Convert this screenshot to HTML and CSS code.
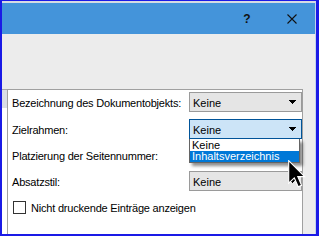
FILE: index.html
```html
<!DOCTYPE html>
<html lang="de">
<head>
<meta charset="utf-8">
<link rel="stylesheet" href="styles.css">
</head>
<body>
<div class="window">
  <div class="titlebar">
    <div class="capbtn help">?</div>
    <div class="capbtn close">
      <svg width="10" height="10" viewBox="0 0 10 10"><path d="M0.5 0.5 L9.5 9.5 M9.5 0.5 L0.5 9.5" stroke="#111" stroke-width="1.1" fill="none"/></svg>
    </div>
  </div>
  <div class="client">
    <div class="leftstrip"><div class="stripbox"></div></div>
    <div class="panel">
      <div class="row r1">
        <span class="label">Bezeichnung des Dokumentobjekts:</span>
        <div class="combo"><span class="val">Keine</span><svg class="arrow" width="7" height="4" viewBox="0 0 7 4" shape-rendering="crispEdges"><path d="M0 0h7v1h-1v1h-1v1h-1v1h-1v-1h-1v-1h-1v-1h-1z" fill="#000"/></svg></div>
      </div>
      <div class="row r2">
        <span class="label">Zielrahmen:</span>
        <div class="combo open"><span class="val">Keine</span><svg class="arrow" width="7" height="4" viewBox="0 0 7 4" shape-rendering="crispEdges"><path d="M0 0h7v1h-1v1h-1v1h-1v1h-1v-1h-1v-1h-1v-1h-1z" fill="#000"/></svg>
          <div class="droplist">
            <div class="item">Keine</div>
            <div class="item sel">Inhaltsverzeichnis</div>
          </div>
        </div>
      </div>
      <div class="row r3">
        <span class="label">Platzierung der Seitennummer:</span>
      </div>
      <div class="row r4">
        <span class="label">Absatzstil:</span>
        <div class="combo"><span class="val">Keine</span><svg class="arrow" width="7" height="4" viewBox="0 0 7 4" shape-rendering="crispEdges"><path d="M0 0h7v1h-1v1h-1v1h-1v1h-1v-1h-1v-1h-1v-1h-1z" fill="#000"/></svg></div>
      </div>
      <div class="row chk">
        <span class="checkbox"></span>
        <span class="label">Nicht druckende Einträge anzeigen</span>
      </div>
    </div>
  </div>
</div>
<svg class="cursor" width="18" height="28" viewBox="0 0 18 28">
  <path transform="translate(0.7 0.7) scale(1.4)" d="M0 0 L0 16 L4 12.3 L6.8 18.6 L9.2 17.6 L6.5 11.4 L11.4 11.4 Z" fill="#000" stroke="#fff" stroke-width="0.8" stroke-linejoin="miter"/>
</svg>
</body>
</html>
```

FILE: styles.css
```css
* { box-sizing: border-box; }
html, body { margin: 0; padding: 0; }
body {
  width: 319px;
  height: 236px;
  background: #1a1ae6;
  overflow: hidden;
  position: relative;
  font-family: "Liberation Sans", Arial, sans-serif;
  font-size: 11px;
  color: #000;
}
.window {
  margin: 1px 3px 0 2px;
  height: 233px;
  border-top: 2px solid #d6dbe3;
  border-right: 1px solid #c4d4ea;
  background: #ececec;
  display: flex;
  flex-direction: column;
}
.titlebar {
  height: 31px;
  background: #4494da;
  display: flex;
  justify-content: flex-end;
  flex: none;
}
.capbtn {
  height: 31px;
  display: flex;
  align-items: center;
  justify-content: center;
}
.help {
  width: 44px;
  font-size: 12px;
  font-weight: bold;
  color: #111;
  padding-top: 1px;
}
.close { width: 46px; padding-top: 1px; }
.close svg { display: block; }
.client {
  flex: 1;
  display: flex;
  padding-top: 55px;
  min-height: 0;
}
.leftstrip {
  width: 5px;
  background: #fff;
  border-top: 1px solid #a8a8a8;
}
.stripbox {
  height: 18px;
  background: #d9dde6;
}
.panel {
  width: 296px;
  background: #fff;
  border: 1px solid #a0a0a0;
  border-bottom: none;
  padding: 1px 0 0 4px;
  display: flex;
  flex-direction: column;
  gap: 6px;
}
.row {
  height: 20px;
  display: flex;
  align-items: center;
  justify-content: space-between;
  flex: none;
}
.r1, .r2 { margin-top: 1px; }
.label {
  white-space: nowrap;
  padding-top: 2px;
  letter-spacing: -0.2px;
}
.combo {
  position: relative;
  width: 113px;
  height: 20px;
  border: 1px solid #9a9a9a;
  background: #e5e5e5;
  display: flex;
  align-items: center;
  justify-content: space-between;
  padding: 1px 5px 0 3px;
}
.combo .arrow { display: block; margin-top: -1px; }
.combo.open {
  background: #cce4f7;
  border-color: #005499;
}
.droplist {
  position: absolute;
  top: calc(100% + 1px);
  left: -1px;
  width: 111px;
  background: #fff;
  border: 1px solid #646464;
  border-top: none;
  box-shadow: 3px 3px 3px rgba(0, 0, 0, 0.45);
  z-index: 2;
}
.item {
  height: 12px;
  line-height: 12px;
  padding-left: 2px;
  white-space: nowrap;
}
.item.sel {
  height: 11px;
  line-height: 11px;
  background: #0078d7;
  color: #fff;
}
.chk { justify-content: flex-start; }
.checkbox {
  width: 13px;
  height: 13px;
  border: 1px solid #333;
  background: #fff;
  margin-left: 1px;
  margin-right: 5px;
  flex: none;
}
.cursor {
  position: absolute;
  left: 288px;
  top: 160px;
  z-index: 5;
}
```
